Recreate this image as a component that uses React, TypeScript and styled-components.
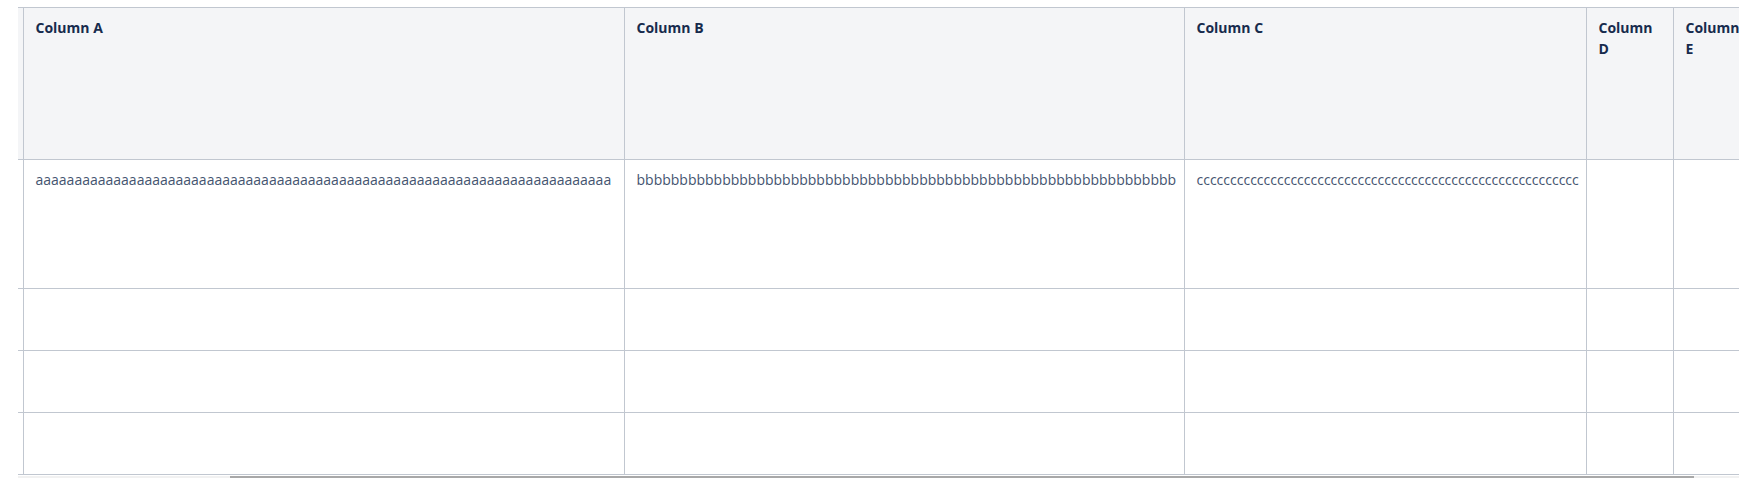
import React, { useLayoutEffect, useRef, useState } from "react";
import styled, { createGlobalStyle } from "styled-components";

const GlobalStyle = createGlobalStyle`
  html, body {
    margin: 0;
    padding: 0;
    overflow: hidden;
    background: #ffffff;
  }
  body {
    font-family: "Open Sans", "Noto Sans", sans-serif;
  }
`;

const Page = styled.div`
  padding: 7px 20px 0 18px;
`;

const Scroller = styled.div`
  overflow-x: auto;
  overflow-y: hidden;
  scrollbar-width: none;
  &::-webkit-scrollbar {
    display: none;
  }
`;

const Track = styled.div`
  width: max-content;
  padding-right: 31px;
`;

const Table = styled.table`
  border-collapse: collapse;
  table-layout: fixed;
  width: 1991px;
  font-family: "Open Sans", "Noto Sans", sans-serif;
  font-size: 14px;
  line-height: 21px;
`;

const HeadRow = styled.tr`
  height: 152px;
`;

const BodyRow = styled.tr<{ $tall?: boolean }>`
  height: ${(p) => (p.$tall ? "129px" : "62px")};
`;

const Th = styled.th<{ $lead?: boolean }>`
  background: #f4f5f7;
  color: #172b4d;
  font-weight: 700;
  text-align: left;
  vertical-align: top;
  padding: 9px 12px;
  border: 1px solid #c1c7d0;
  border-left: ${(p) => (p.$lead ? "none" : "1px solid #c1c7d0")};
  overflow: hidden;
`;

const Td = styled.td<{ $lead?: boolean }>`
  background: #ffffff;
  color: #44546f;
  vertical-align: top;
  padding: 9px 12px;
  border: 1px solid #c1c7d0;
  border-left: ${(p) => (p.$lead ? "none" : "1px solid #c1c7d0")};
  white-space: nowrap;
  overflow: hidden;
`;

const ScrollTrack = styled.div`
  position: relative;
  height: 8px;
  background: #f1f1f1;
  border-top: 1px solid #ffffff;
`;

const ScrollThumb = styled.div`
  position: absolute;
  top: 0;
  height: 7px;
  background: #a8a8a8;
`;

const widths = [254, 601, 560, 402, 87, 87];
const headers = ["", "Column A", "Column B", "Column C", "Column D", "Column E"];
const firstRow = [
  "",
  "a".repeat(74),
  "b".repeat(63),
  "c".repeat(57),
  "",
  "",
];

export default function App() {
  const ref = useRef<HTMLDivElement>(null);
  const [thumb, setThumb] = useState({ left: 0, width: 0 });

  useLayoutEffect(() => {
    const el = ref.current;
    if (!el) return;
    el.scrollLeft = 249;
    const update = () => {
      const ratio = el.clientWidth / el.scrollWidth;
      setThumb({ left: el.scrollLeft * ratio, width: el.clientWidth * ratio });
    };
    update();
    el.addEventListener("scroll", update);
    return () => el.removeEventListener("scroll", update);
  }, []);

  return (
    <>
      <GlobalStyle />
      <Page>
        <Scroller ref={ref}>
          <Track>
            <Table>
              <colgroup>
                {widths.map((w, i) => (
                  <col key={i} style={{ width: w }} />
                ))}
              </colgroup>
              <thead>
                <HeadRow>
                  {headers.map((h, i) => (
                    <Th key={i} $lead={i === 0}>
                      {h}
                    </Th>
                  ))}
                </HeadRow>
              </thead>
              <tbody>
                <BodyRow $tall>
                  {firstRow.map((t, i) => (
                    <Td key={i} $lead={i === 0}>
                      {t}
                    </Td>
                  ))}
                </BodyRow>
                {[0, 1, 2].map((r) => (
                  <BodyRow key={r}>
                    {widths.map((_, i) => (
                      <Td key={i} $lead={i === 0} />
                    ))}
                  </BodyRow>
                ))}
              </tbody>
            </Table>
          </Track>
        </Scroller>
        <ScrollTrack>
          <ScrollThumb style={{ left: thumb.left, width: thumb.width }} />
        </ScrollTrack>
      </Page>
    </>
  );
}
